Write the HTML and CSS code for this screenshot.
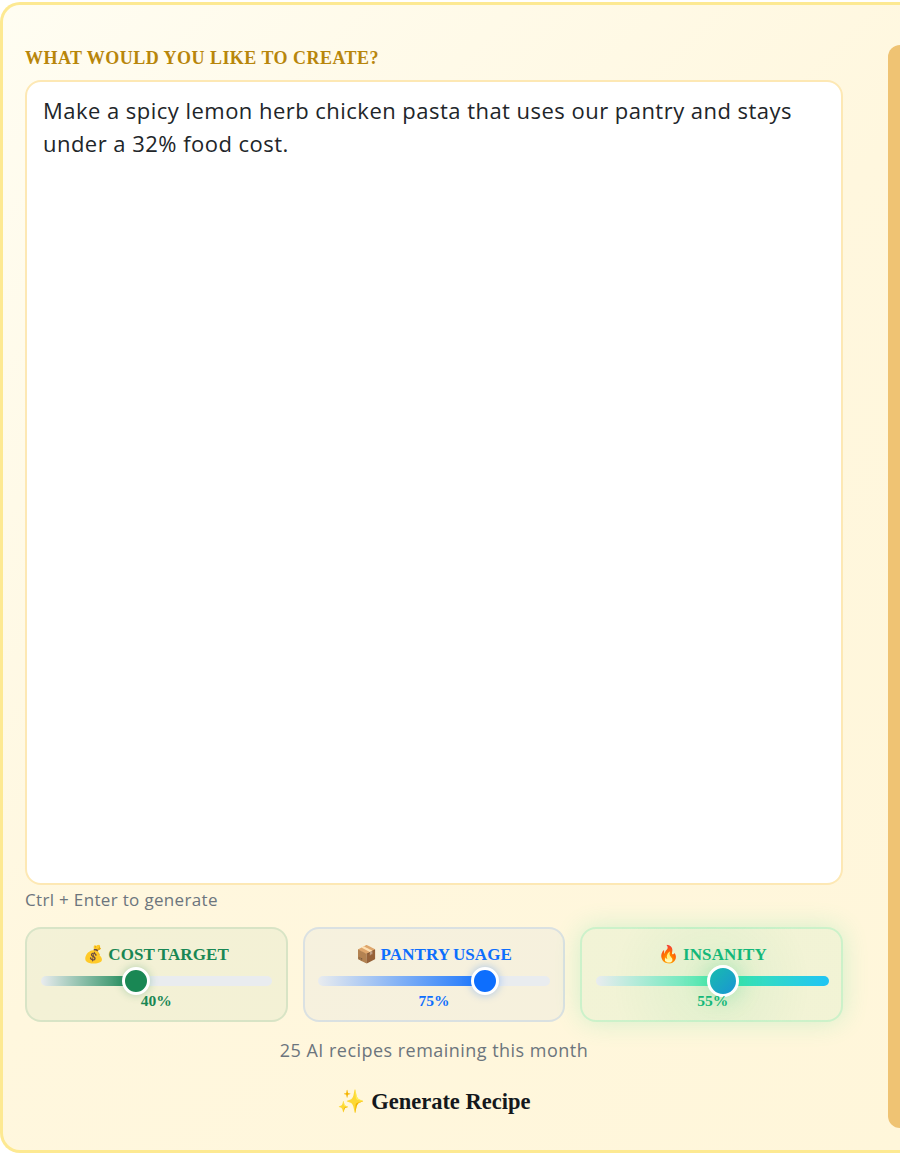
FILE: index.html
```html
<!DOCTYPE html>
<html lang="en">
<head>
  <meta charset="UTF-8">
  <meta name="viewport" content="width=device-width, initial-scale=1.0">
  <title>Generate Recipe</title>
  <link rel="stylesheet" href="styles.css">
</head>
<body>

  <div class="card">
    <div class="composer">
      <label class="prompt-label" for="prompt">What would you like to create?</label>
      <textarea id="prompt" class="prompt">Make a spicy lemon herb chicken pasta that uses our pantry and stays under a 32% food cost.</textarea>
      <div class="hint">Ctrl + Enter to generate</div>

      <!-- Recipe sliders -->
      <div class="sliders">
        <div class="slider-box cost">
          <div class="slider-title"><span class="emoji">💰</span> Cost Target</div>
          <input class="slider" type="range" min="0" max="100" value="40" style="background: linear-gradient(90deg, #e9ecef 0%, #198754 40%, #e9ecef 40%)">
          <div class="slider-value">40%</div>
        </div>
        <div class="slider-box pantry">
          <div class="slider-title"><span class="emoji">📦</span> Pantry Usage</div>
          <input class="slider" type="range" min="0" max="100" value="75" style="background: linear-gradient(90deg, #e9ecef 0%, #0d6efd 75%, #e9ecef 75%)">
          <div class="slider-value">75%</div>
        </div>
        <div class="slider-box insanity">
          <div class="slider-title"><span class="emoji">🔥</span> Insanity</div>
          <input class="slider" type="range" min="0" max="100" value="55" style="background: linear-gradient(90deg, #e9ecef 0%, #3de8a8 55%, #20c4f4 100%)">
          <div class="slider-value">55%</div>
        </div>
      </div>

      <div class="remaining">25 AI recipes remaining this month</div>
      <button class="generate"><span class="emoji">✨</span> Generate Recipe</button>
    </div>

    <div class="side-panel"></div>
  </div>

</body>
</html>
```

FILE: styles.css
```css
* {
  margin: 0;
  padding: 0;
  box-sizing: border-box;
}

body {
  font-family: 'Open Sans', sans-serif;
  background-color: #fff;
  padding-top: 2px;
}

/* The card runs off the right edge of the window */
.card {
  display: flex;
  justify-content: space-between;
  height: 1151px;
  border: 3px solid #fde992;
  border-right: none;
  border-radius: 20px 0 0 20px;
  background: linear-gradient(135deg, #fffdf2 0%, #fff7de 50%, #fff6da 100%);
  padding: 40px 0 24px 22px;
}

.composer {
  display: flex;
  flex-direction: column;
  width: 818px;
}

.prompt-label {
  font-family: 'Liberation Serif', serif;
  font-weight: 700;
  font-size: 18px;
  line-height: 24px;
  letter-spacing: 0.47px;
  text-transform: uppercase;
  color: #b8860b;
  margin-top: 1px;
  margin-bottom: 10px;
}

.prompt {
  display: block;
  width: 100%;
  height: 805px;
  resize: none;
  border: 2px solid #fde8b4;
  border-radius: 16px;
  background-color: #fff;
  padding: 12px 16px;
  font-family: 'Open Sans', sans-serif;
  font-size: 22px;
  line-height: 33px;
  letter-spacing: 0.47px;
  color: #212529;
  outline: none;
}

.hint {
  font-size: 17px;
  line-height: 24px;
  letter-spacing: 0.33px;
  color: #6c757d;
  margin-top: 3px;
}

.sliders {
  display: grid;
  grid-template-columns: repeat(3, 1fr);
  gap: 15px;
  margin-top: 15px;
}

.slider-box {
  height: 95px;
  border: 2px solid;
  border-radius: 16px;
  padding: 13px 13.5px 0;
  text-align: center;
}

.slider-box.cost {
  color: #198754;
  border-color: rgba(25, 135, 84, 0.12);
  background-color: rgba(25, 135, 84, 0.05);
}

.slider-box.pantry {
  color: #0d6efd;
  border-color: rgba(13, 110, 253, 0.12);
  background-color: rgba(13, 110, 253, 0.04);
}

.slider-box.insanity {
  color: #14b87a;
  padding-left: 14px;
  padding-right: 12px;
  border-color: rgba(32, 232, 150, 0.18);
  background: radial-gradient(circle at 50% 60%, rgba(32, 201, 120, 0.14), rgba(32, 201, 120, 0.06) 70%);
  box-shadow: 0 0 26px rgba(32, 220, 140, 0.2);
}

.slider-title {
  font-family: 'Liberation Serif', serif;
  font-weight: 700;
  font-size: 17px;
  line-height: 24px;
  letter-spacing: 0.1px;
  word-spacing: -1px;
  text-transform: uppercase;
}

.emoji {
  font-family: 'Noto Color Emoji', sans-serif;
  font-weight: 400;
}

.slider {
  display: block;
  -webkit-appearance: none;
  appearance: none;
  width: 100%;
  height: 10px;
  border-radius: 5px;
  margin-top: 9px;
  outline: none;
}

.slider::-webkit-slider-thumb {
  -webkit-appearance: none;
  width: 28px;
  height: 28px;
  border-radius: 50%;
  border: 3px solid #fff;
  box-shadow: 0 0 8px rgba(25, 135, 84, 0.3);
}

.cost .slider::-webkit-slider-thumb {
  background-color: #198754;
}

.pantry .slider::-webkit-slider-thumb {
  background-color: #0d6efd;
  box-shadow: 0 0 8px rgba(13, 110, 253, 0.35);
}

.insanity .slider::-webkit-slider-thumb {
  width: 32px;
  height: 32px;
  background: linear-gradient(135deg, #18bcae, #1a94d4);
  box-shadow: 0 0 22px rgba(32, 201, 120, 0.35);
}

.slider-value {
  font-family: 'Liberation Serif', serif;
  font-weight: 700;
  font-size: 15.5px;
  line-height: 18px;
  margin-top: 6px;
}

.remaining {
  font-size: 18px;
  line-height: 24px;
  letter-spacing: 0.47px;
  color: #6c757d;
  text-align: center;
  margin-top: 16px;
}

.generate {
  align-self: center;
  border: none;
  background: none;
  font-family: 'Liberation Serif', serif;
  font-weight: 700;
  font-size: 22.5px;
  line-height: 30px;
  color: #14181c;
  margin-top: 24px;
}

.side-panel {
  width: 12px;
  height: 1083px;
  background-color: #efc373;
  border-radius: 18px 0 0 18px;
}
```
